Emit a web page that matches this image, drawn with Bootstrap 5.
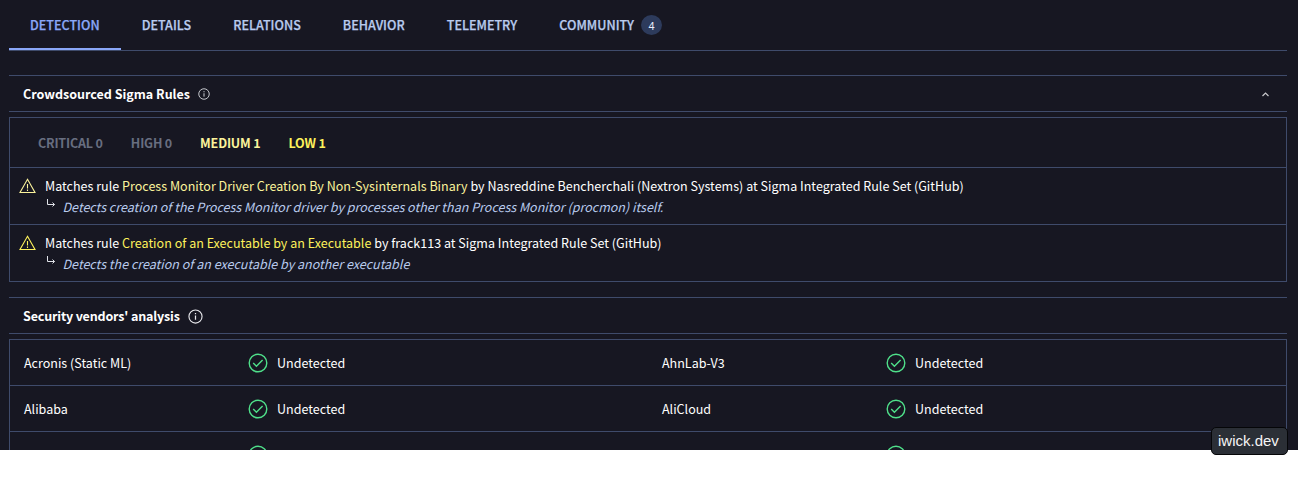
<!DOCTYPE html>
<html lang="en" data-bs-theme="dark">
<head>
<meta charset="utf-8">
<meta name="viewport" content="width=device-width, initial-scale=1">
<title>Detection report</title>
<link href="https://cdn.jsdelivr.net/npm/bootstrap@5.3.0/dist/css/bootstrap.min.css" rel="stylesheet">
<style>
  :root { --line: #3f4b6b; --ink: #171722; }
  html, body { background: #fff; }
  body { font-family: "Noto Sans CJK JP", "Noto Sans", sans-serif; font-size: 12.53px; line-height: 20px; color: #fff; overflow: hidden; }
  svg { display: block; flex: none; }
  .report { height: 450px; background: var(--ink); padding: 0 11px 0 9px; }
  .tabs { --bs-nav-tabs-border-width: 0; height: 51px; border-bottom: 1px solid var(--line); flex-wrap: nowrap; }
  .tabs .nav-link { height: 50px; padding: 2px 21px 0; border: 0; border-bottom: 2px solid transparent; border-radius: 0; color: #b9cbee; font-weight: 500; letter-spacing: .03px; -webkit-text-stroke: .25px currentColor; display: flex; align-items: center; background: none; }
  .tabs .nav-link.active { color: #8aa7f8; background: none; border-bottom-color: #8aa7f8; }
  .count { width: 21px; height: 20px; margin: -1px 0 0 7px; background: #2d3b5c; color: #e8eefc; font: 11px/22px "Liberation Sans", sans-serif; -webkit-text-stroke: 0; }
  .section-head { height: 37px; border: solid var(--line); border-width: 1px 0; padding: 1px 14px 0; margin-bottom: 5px; font-weight: 700; }
  .vendors-head { margin-top: 15px; }
  .chevron { margin-right: 4px; }
  .tight { letter-spacing: -.17px; }
  .panel { border: 1px solid var(--line); }
  .levels { height: 49px; padding: 1px 28px 0; gap: 28px; font-weight: 700; color: #686e80; }
  .medium { color: #fbf39b; }
  .low { color: #fdf15b; }
  .rule { height: 57px; border-top: 1px solid var(--line); padding: 8px 0 0 9px; }
  .rule-icon { margin-top: 2px; }
  .rule-text { margin-left: 9px; letter-spacing: .013px; }
  .rule-note { color: #b9cbee; font-style: italic; height: 21px; padding-top: 1px; letter-spacing: 0; }
  .turn { margin: 2px 6.5px 0 2px; }
  .vendor-row { height: 46px; border-bottom: 1px solid var(--line); }
  .vendor { width: 638px; padding: 1px 0 0 14px; flex: none; }
  .vendor-name { width: 224px; }
  .verdict { margin-left: 9px; }
  .site-tag { right: 10px; top: 427px; width: 77px; height: 28px; border: 1px solid #050608; border-radius: 5px; background: #2b2f36; color: #f5f5f5; font: 15px/26px "Liberation Sans", sans-serif; padding-left: 6px; }
</style>
</head>
<body>
<svg width="0" height="0" class="position-absolute" aria-hidden="true">
  <symbol id="info" viewBox="0 0 16 16"><circle cx="8" cy="8" r="7" fill="none" stroke="currentColor" stroke-width="1.2"/><path d="M8 7v4.5M8 4.2v1.5" stroke="currentColor" stroke-width="1.3"/></symbol>
  <symbol id="warn" viewBox="0 0 17 16"><path d="M8.500 1.300 16 14.500H1Z" fill="none" stroke="currentColor" stroke-width="1.100"/><path d="M8.500 6v4.500M8.500 11.500v1.400" stroke="currentColor" stroke-width="1.100"/></symbol>
  <symbol id="turn" viewBox="0 0 9 9"><path d="M.5 0v5.500H7.500M5.500 3.500l2 2-2 2" fill="none" stroke="currentColor"/></symbol>
  <symbol id="ok" viewBox="0 0 20 20"><circle cx="10" cy="10" r="8.800" fill="none" stroke="currentColor" stroke-width="1.400"/><path d="M5.200 10l3.200 3.200 6.200-6.200" fill="none" stroke="currentColor" stroke-width="1.400"/></symbol>
</svg>
<main class="report overflow-hidden">
  <ul class="nav nav-tabs tabs">
    <li class="nav-item"><a class="nav-link active">DETECTION</a></li>
    <li class="nav-item"><a class="nav-link">DETAILS</a></li>
    <li class="nav-item"><a class="nav-link">RELATIONS</a></li>
    <li class="nav-item"><a class="nav-link">BEHAVIOR</a></li>
    <li class="nav-item"><a class="nav-link">TELEMETRY</a></li>
    <li class="nav-item"><a class="nav-link">COMMUNITY<span class="count rounded-circle text-center">4</span></a></li>
  </ul>

  <div class="section-head d-flex align-items-center mt-4">
    <span>Crowdsourced Sigma Rules</span>
    <svg class="ms-2" width="12" height="12" color="#d5d7dd"><use href="#info"/></svg>
    <svg class="chevron ms-auto" width="7" height="5" viewBox="0 0 7 5"><path d="M.5 4 3.500 1l3 3" fill="none" stroke="#c8c8cc" stroke-width="1.200"/></svg>
  </div>
  <section class="panel">
    <div class="levels tight d-flex align-items-center">
      <span>CRITICAL 0</span><span>HIGH 0</span><span class="medium">MEDIUM 1</span><span class="low">LOW 1</span>
    </div>
    <div class="rule d-flex">
      <svg class="rule-icon medium" width="17" height="16"><use href="#warn"/></svg>
      <div class="rule-text">
        <div>Matches rule <span class="medium">Process Monitor Driver Creation By Non-Sysinternals Binary</span> by Nasreddine Bencherchali (Nextron Systems) at Sigma Integrated Rule Set (GitHub)</div>
        <div class="rule-note d-flex"><svg class="turn" width="9" height="9" color="#e0e2e8"><use href="#turn"/></svg><span>Detects creation of the Process Monitor driver by processes other than Process Monitor (procmon) itself.</span></div>
      </div>
    </div>
    <div class="rule d-flex">
      <svg class="rule-icon low" width="17" height="16"><use href="#warn"/></svg>
      <div class="rule-text">
        <div>Matches rule <span class="low">Creation of an Executable by an Executable</span> by frack113 at Sigma Integrated Rule Set (GitHub)</div>
        <div class="rule-note d-flex"><svg class="turn" width="9" height="9" color="#e0e2e8"><use href="#turn"/></svg><span>Detects the creation of an executable by another executable</span></div>
      </div>
    </div>
  </section>

  <div class="section-head vendors-head d-flex align-items-center">
    <span class="tight">Security vendors' analysis</span>
    <svg class="ms-2" width="15" height="15" color="#e8e8ec"><use href="#info"/></svg>
  </div>
  <section class="panel">
    <div class="vendor-row d-flex">
      <div class="vendor d-flex align-items-center"><span class="vendor-name">Acronis (Static ML)</span><svg width="20" height="20" color="#4fe08a"><use href="#ok"/></svg><span class="verdict">Undetected</span></div>
      <div class="vendor d-flex align-items-center"><span class="vendor-name">AhnLab-V3</span><svg width="20" height="20" color="#4fe08a"><use href="#ok"/></svg><span class="verdict">Undetected</span></div>
    </div>
    <div class="vendor-row d-flex">
      <div class="vendor d-flex align-items-center"><span class="vendor-name">Alibaba</span><svg width="20" height="20" color="#4fe08a"><use href="#ok"/></svg><span class="verdict">Undetected</span></div>
      <div class="vendor d-flex align-items-center"><span class="vendor-name">AliCloud</span><svg width="20" height="20" color="#4fe08a"><use href="#ok"/></svg><span class="verdict">Undetected</span></div>
    </div>
    <div class="vendor-row d-flex">
      <div class="vendor d-flex align-items-center"><span class="vendor-name"></span><svg width="20" height="20" color="#4fe08a"><use href="#ok"/></svg></div>
      <div class="vendor d-flex align-items-center"><span class="vendor-name"></span><svg width="20" height="20" color="#4fe08a"><use href="#ok"/></svg></div>
    </div>
  </section>
</main>
<div class="site-tag position-absolute">iwick.dev</div>
<script src="https://cdn.jsdelivr.net/npm/bootstrap@5.3.0/dist/js/bootstrap.bundle.min.js"></script>
</body>
</html>
